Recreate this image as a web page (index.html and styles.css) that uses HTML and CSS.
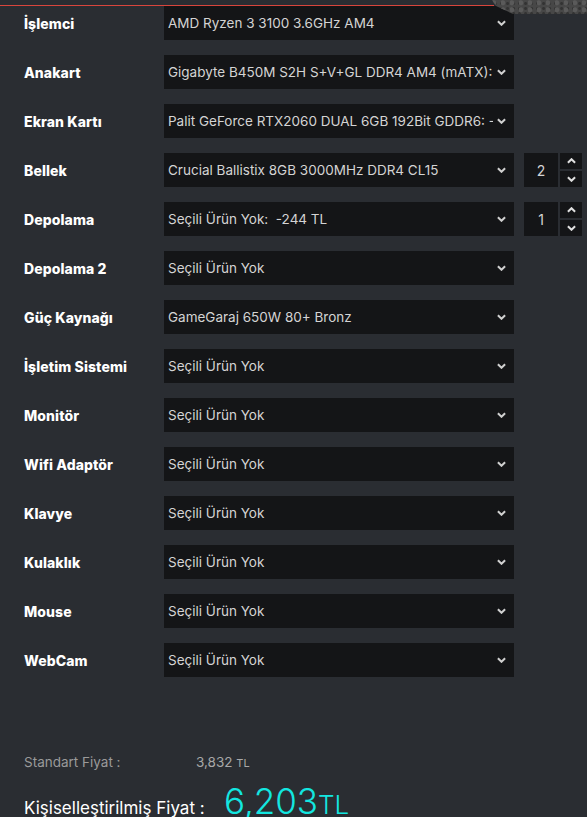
FILE: index.html
```html
<!DOCTYPE html>
<html lang="tr">
<head>
<meta charset="utf-8">
<link rel="stylesheet" href="styles.css">
</head>
<body>
<div class="topbar">
  <div class="redline"></div>
  <div class="texture"></div>
</div>
<div class="rows">
  <div class="row"><div class="label">İşlemci</div><div class="sel"><span class="txt">AMD Ryzen 3 3100 3.6GHz AM4</span><svg class="chev" viewBox="0 0 10 6"><path d="M1 1l4 4 4-4"/></svg></div></div>
  <div class="row"><div class="label">Anakart</div><div class="sel"><span class="txt">Gigabyte B450M S2H S+V+GL DDR4 AM4 (mATX): - 1,290 TL</span><svg class="chev" viewBox="0 0 10 6"><path d="M1 1l4 4 4-4"/></svg></div></div>
  <div class="row"><div class="label">Ekran Kartı</div><div class="sel"><span class="txt">Palit GeForce RTX2060 DUAL 6GB 192Bit GDDR6: - 4,190 TL</span><svg class="chev" viewBox="0 0 10 6"><path d="M1 1l4 4 4-4"/></svg></div></div>
  <div class="row"><div class="label">Bellek</div><div class="sel"><span class="txt">Crucial Ballistix 8GB 3000MHz DDR4 CL15</span><svg class="chev" viewBox="0 0 10 6"><path d="M1 1l4 4 4-4"/></svg></div>
    <div class="qty"><div class="num">2</div><div class="spin"><div class="sb"><svg viewBox="0 0 10 6"><path d="M1 5l4-4 4 4"/></svg></div><div class="sb"><svg viewBox="0 0 10 6"><path d="M1 1l4 4 4-4"/></svg></div></div></div></div>
  <div class="row"><div class="label">Depolama</div><div class="sel"><span class="txt">Seçili Ürün Yok:&nbsp; -244 TL</span><svg class="chev" viewBox="0 0 10 6"><path d="M1 1l4 4 4-4"/></svg></div>
    <div class="qty"><div class="num">1</div><div class="spin"><div class="sb"><svg viewBox="0 0 10 6"><path d="M1 5l4-4 4 4"/></svg></div><div class="sb"><svg viewBox="0 0 10 6"><path d="M1 1l4 4 4-4"/></svg></div></div></div></div>
  <div class="row"><div class="label">Depolama 2</div><div class="sel"><span class="txt">Seçili Ürün Yok</span><svg class="chev" viewBox="0 0 10 6"><path d="M1 1l4 4 4-4"/></svg></div></div>
  <div class="row"><div class="label">Güç Kaynağı</div><div class="sel"><span class="txt">GameGaraj 650W 80+ Bronz</span><svg class="chev" viewBox="0 0 10 6"><path d="M1 1l4 4 4-4"/></svg></div></div>
  <div class="row"><div class="label">İşletim Sistemi</div><div class="sel"><span class="txt">Seçili Ürün Yok</span><svg class="chev" viewBox="0 0 10 6"><path d="M1 1l4 4 4-4"/></svg></div></div>
  <div class="row"><div class="label">Monitör</div><div class="sel"><span class="txt">Seçili Ürün Yok</span><svg class="chev" viewBox="0 0 10 6"><path d="M1 1l4 4 4-4"/></svg></div></div>
  <div class="row"><div class="label">Wifi Adaptör</div><div class="sel"><span class="txt">Seçili Ürün Yok</span><svg class="chev" viewBox="0 0 10 6"><path d="M1 1l4 4 4-4"/></svg></div></div>
  <div class="row"><div class="label">Klavye</div><div class="sel"><span class="txt">Seçili Ürün Yok</span><svg class="chev" viewBox="0 0 10 6"><path d="M1 1l4 4 4-4"/></svg></div></div>
  <div class="row"><div class="label">Kulaklık</div><div class="sel"><span class="txt">Seçili Ürün Yok</span><svg class="chev" viewBox="0 0 10 6"><path d="M1 1l4 4 4-4"/></svg></div></div>
  <div class="row"><div class="label">Mouse</div><div class="sel"><span class="txt">Seçili Ürün Yok</span><svg class="chev" viewBox="0 0 10 6"><path d="M1 1l4 4 4-4"/></svg></div></div>
  <div class="row"><div class="label">WebCam</div><div class="sel"><span class="txt">Seçili Ürün Yok</span><svg class="chev" viewBox="0 0 10 6"><path d="M1 1l4 4 4-4"/></svg></div></div>
</div>
<div class="prices">
  <div class="std"><span class="std-l">Standart Fiyat :</span><span class="std-v">3,832 <small>TL</small></span></div>
  <div class="cus"><span class="cus-l">Kişiselleştirilmiş Fiyat :</span><span class="cus-v">6,203<span class="cus-tl">TL</span></span></div>
</div>
</body>
</html>
```
FILE: styles.css
```css
html, body {
  margin: 0;
  padding: 0;
  background: #2a2d32;
  font-family: Inter, Roboto, "Liberation Sans", sans-serif;
  overflow: hidden;
}
.topbar {
  position: relative;
  height: 6px;
}
.redline {
  position: absolute;
  left: 0;
  top: 5px;
  width: 494px;
  height: 1px;
  background: #d9453d;
}
.texture {
  position: absolute;
  right: 0;
  top: 0;
  width: 95px;
  height: 14px;
  background:
    radial-gradient(circle at 20% 40%, #5a5a5a 0 2px, transparent 3px) 0 0 / 9px 7px,
    radial-gradient(circle at 60% 70%, #333 0 1px, transparent 2px) 0 0 / 6px 5px,
    #474747;
  clip-path: polygon(0 0, 100% 0, 100% 100%, 21px 100%, 4px 6px);
}
.rows {
  display: flex;
  flex-direction: column;
  gap: 15px;
}
.row {
  display: flex;
  align-items: center;
  height: 34px;
}
.label {
  width: 140px;
  padding-left: 24px;
  color: #fff;
  font-weight: 800;
  font-size: 14px;
  letter-spacing: 0.1px;
}
.sel {
  width: 350px;
  height: 34px;
  background: #141517;
  display: flex;
  align-items: center;
  box-sizing: border-box;
  padding-left: 4px;
  padding-right: 8px;
}
.txt {
  flex: 1;
  color: #d4d4d4;
  font-size: 13.5px;
  white-space: nowrap;
  overflow: hidden;
  margin-right: 4px;
}
.chev {
  width: 9px;
  height: 6px;
  fill: none;
  stroke: #d0d0d0;
  stroke-width: 2.2;
}
.qty {
  display: flex;
  margin-left: 10px;
  gap: 2px;
}
.num {
  width: 34px;
  height: 34px;
  background: #141517;
  color: #d4d4d4;
  font-size: 14px;
  display: flex;
  align-items: center;
  justify-content: center;
}
.spin {
  display: flex;
  flex-direction: column;
  gap: 2px;
}
.sb {
  width: 22px;
  height: 16px;
  background: #141517;
  display: flex;
  align-items: center;
  justify-content: center;
}
.sb svg {
  width: 9px;
  height: 6px;
  fill: none;
  stroke: #e0e0e0;
  stroke-width: 2.2;
}
.prices {
  padding: 77px 0 0 24px;
}
.std {
  display: flex;
  align-items: baseline;
  color: #9a9a9a;
  font-size: 13.5px;
}
.std-l { width: 172px; }
.std-v { color: #a8a8a8; }
.std-v small { font-size: 11px; }
.cus {
  display: flex;
  align-items: baseline;
  margin-top: 14px;
  color: #fff;
}
.cus-l {
  font-size: 17px;
  width: 200px;
}
.cus-v {
  color: #13e6e0;
  font-size: 35px;
  font-weight: 300;
  line-height: 1;
}
.cus-tl {
  font-size: 26px;
}
```
